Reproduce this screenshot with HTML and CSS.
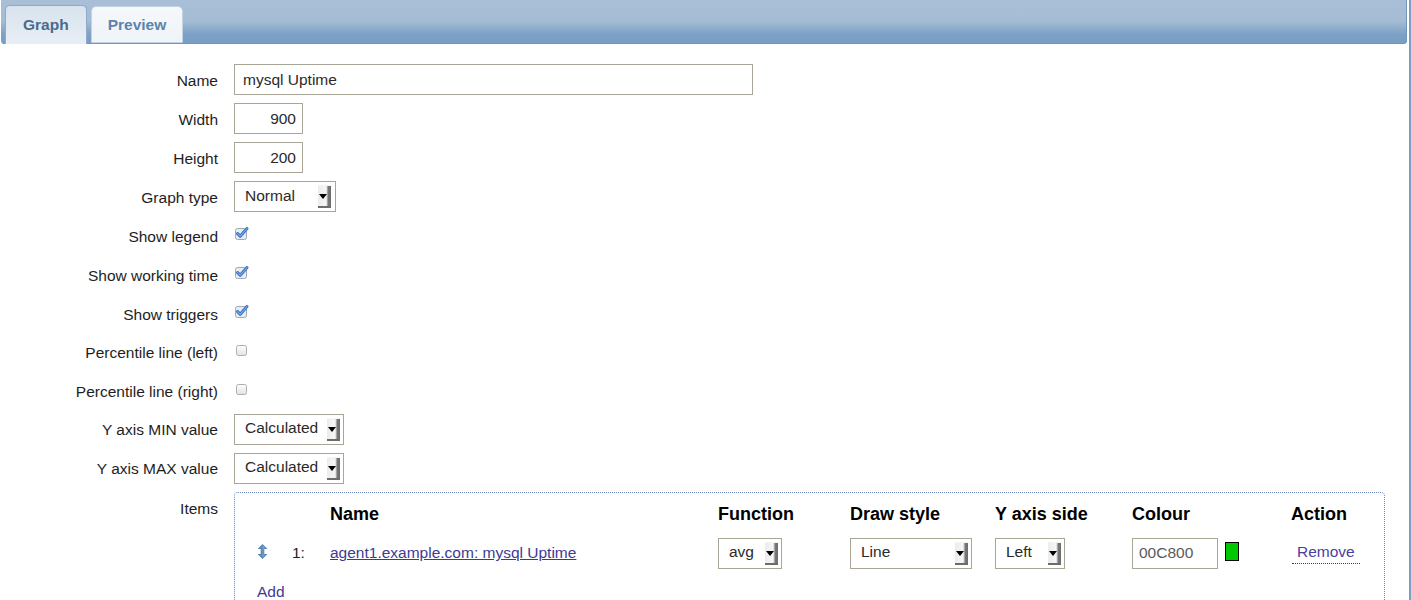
FILE: index.html
```html
<!DOCTYPE html>
<html>
<head>
<meta charset="utf-8">
<title>Graph</title>
<link rel="stylesheet" href="styles.css">
</head>
<body>
<div class="page">
  <div class="tabbar">
    <div class="tab tab-active">Graph</div>
    <div class="tab">Preview</div>
  </div>

  <div class="form">
    <div class="label">Name</div>
    <div class="field"><input class="input input-name" type="text" value="mysql Uptime"></div>

    <div class="label">Width</div>
    <div class="field"><input class="input input-num" type="text" value="900"></div>

    <div class="label">Height</div>
    <div class="field"><input class="input input-num" type="text" value="200"></div>

    <div class="label">Graph type</div>
    <div class="field"><div class="select select-type"><span>Normal</span><span class="sel-btn"><span class="sel-tri"></span></span></div></div>

    <div class="label">Show legend</div>
    <div class="field field-cb"><svg class="cb" width="15" height="14" viewBox="0 0 15 14"><rect x="0.5" y="2.5" width="11" height="11" rx="2" fill="#e5ecf3" stroke="#a0a9b3"/><path d="M2.6 7.6 L5.2 10.2 L12 2.6" fill="none" stroke="#2f68b8" stroke-width="3" stroke-linecap="round" stroke-linejoin="round"/><path d="M2.6 7.6 L5.2 10.2 L12 2.6" fill="none" stroke="#7fb2ee" stroke-width="1.1" stroke-linecap="round" stroke-linejoin="round"/></svg></div>

    <div class="label">Show working time</div>
    <div class="field field-cb"><svg class="cb" width="15" height="14" viewBox="0 0 15 14"><rect x="0.5" y="2.5" width="11" height="11" rx="2" fill="#e5ecf3" stroke="#a0a9b3"/><path d="M2.6 7.6 L5.2 10.2 L12 2.6" fill="none" stroke="#2f68b8" stroke-width="3" stroke-linecap="round" stroke-linejoin="round"/><path d="M2.6 7.6 L5.2 10.2 L12 2.6" fill="none" stroke="#7fb2ee" stroke-width="1.1" stroke-linecap="round" stroke-linejoin="round"/></svg></div>

    <div class="label">Show triggers</div>
    <div class="field field-cb"><svg class="cb" width="15" height="14" viewBox="0 0 15 14"><rect x="0.5" y="2.5" width="11" height="11" rx="2" fill="#e5ecf3" stroke="#a0a9b3"/><path d="M2.6 7.6 L5.2 10.2 L12 2.6" fill="none" stroke="#2f68b8" stroke-width="3" stroke-linecap="round" stroke-linejoin="round"/><path d="M2.6 7.6 L5.2 10.2 L12 2.6" fill="none" stroke="#7fb2ee" stroke-width="1.1" stroke-linecap="round" stroke-linejoin="round"/></svg></div>

    <div class="label">Percentile line (left)</div>
    <div class="field field-cb"><svg class="cb" width="15" height="14" viewBox="0 0 15 14"><defs><linearGradient id="ug1" x1="0" y1="0" x2="0" y2="1"><stop offset="0" stop-color="#ffffff"/><stop offset="1" stop-color="#e2e2e2"/></linearGradient></defs><rect x="1.5" y="3.5" width="10" height="10" rx="2" fill="url(#ug1)" stroke="#aeaeae"/></svg></div>

    <div class="label">Percentile line (right)</div>
    <div class="field field-cb"><svg class="cb" width="15" height="14" viewBox="0 0 15 14"><defs><linearGradient id="ug2" x1="0" y1="0" x2="0" y2="1"><stop offset="0" stop-color="#ffffff"/><stop offset="1" stop-color="#e2e2e2"/></linearGradient></defs><rect x="1.5" y="3.5" width="10" height="10" rx="2" fill="url(#ug2)" stroke="#aeaeae"/></svg></div>

    <div class="label label-sel">Y axis MIN value</div>
    <div class="field"><div class="select select-axis"><span>Calculated</span><span class="sel-btn"><span class="sel-tri"></span></span></div></div>

    <div class="label label-sel">Y axis MAX value</div>
    <div class="field"><div class="select select-axis"><span>Calculated</span><span class="sel-btn"><span class="sel-tri"></span></span></div></div>

    <div class="label">Items</div>
    <div class="field">
      <div class="items">
        <div class="items-grid">
          <div></div>
          <div></div>
          <div class="th">Name</div>
          <div class="th">Function</div>
          <div class="th">Draw style</div>
          <div class="th">Y axis side</div>
          <div class="th">Colour</div>
          <div class="th">Action</div>

          <div class="cell"><svg class="drag" width="11" height="15" viewBox="0 0 11 15"><path d="M5.5 0 L10.5 5 L7.3 5 L7.3 10 L10.5 10 L5.5 15 L0.5 10 L3.7 10 L3.7 5 L0.5 5 Z" fill="#5a87b6"/><path d="M5.5 1.5 L8 4.2 L6.3 4.2 L6.3 10.8 L8 10.8 L5.5 13.5 Z" fill="#7ea6cf"/></svg></div>
          <div class="cell num">1:</div>
          <div class="cell"><a class="link" href="#">agent1.example.com: mysql Uptime</a></div>
          <div class="cell"><div class="select select-func"><span>avg</span><span class="sel-btn"><span class="sel-tri"></span></span></div></div>
          <div class="cell"><div class="select select-draw"><span>Line</span><span class="sel-btn"><span class="sel-tri"></span></span></div></div>
          <div class="cell"><div class="select select-side"><span>Left</span><span class="sel-btn"><span class="sel-tri"></span></span></div></div>
          <div class="cell"><input class="input input-colour" type="text" value="00C800"><span class="swatch"></span></div>
          <div class="cell"><span class="remove">Remove</span></div>
        </div>
        <div class="add">Add</div>
      </div>
    </div>
  </div>
</div>
</body>
</html>
```

FILE: styles.css
```css
html, body {
  margin: 0;
  padding: 0;
  background: #ffffff;
}

body {
  font-family: "Liberation Sans", Arial, sans-serif;
  font-size: 15.5px;
  line-height: 18px;
  color: #1e1e1e;
}

.page {
  width: 1409px;
  min-height: 600px;
  border-right: 2px solid #7a9fc5;
  overflow: hidden;
}

/* ---------- tab bar ---------- */
.tabbar {
  box-sizing: border-box;
  height: 44px;
  margin: 0 2px 0 1px;
  padding-left: 4px;
  display: flex;
  align-items: flex-end;
  gap: 4px;
  background: linear-gradient(#a8bfd7 0%, #a5bcd4 48%, #7ca1c6 78%, #789ec4 100%);
  border-radius: 0 0 4px 4px;
  box-shadow: inset -1px -1px 0 #7294b9;
}

.tab {
  font-weight: bold;
  font-size: 15.5px;
  line-height: 18px;
  padding: 9px 16px 8px;
  margin-bottom: 1px;
  border: 1px solid #c3d3e4;
  border-radius: 5px 5px 0 0;
  background: linear-gradient(#f6f8fb, #eff4f8);
  color: #5a84ae;
}

.tab-active {
  padding: 10px 17px 10px;
  margin-bottom: 0;
  border-color: #8eabc9;
  border-bottom: none;
  background: linear-gradient(#d8e3ee, #e8eef5);
  color: #4a6a8d;
}

/* ---------- form ---------- */
.form {
  display: grid;
  grid-template-columns: 218px 1fr;
  column-gap: 16px;
  row-gap: 8px;
  padding-top: 20px;
}

.label {
  text-align: right;
  padding-top: 8px;
  white-space: nowrap;
  color: #1e1e1e;
}

.label-sel {
  padding-top: 7px;
}

.field {
  min-height: 31px;
  display: flex;
  align-items: flex-start;
}

.field-cb {
  min-height: 30.8px;
}

.input {
  box-sizing: border-box;
  height: 31px;
  margin: 0;
  border: 1px solid #aaa697;
  border-radius: 0;
  background: #fff;
  font-family: "Liberation Sans", Arial, sans-serif;
  font-size: 15.5px;
  color: #2a2a2a;
  padding: 0 8px;
  outline: none;
}

.input-name {
  width: 519px;
}

.input-num {
  width: 69px;
  text-align: right;
  padding-right: 6px;
}

.input-colour {
  width: 86px;
  padding-left: 6px;
  color: #5a5a5a;
}

.select {
  box-sizing: border-box;
  height: 31px;
  border: 1px solid #aaa697;
  background: #fff;
  display: flex;
  align-items: center;
  justify-content: space-between;
  padding: 0 3px 2px 10px;
  color: #2a2a2a;
  white-space: nowrap;
}

.select-type { width: 102px; padding-right: 4px; }
.select-axis { width: 110px; }
.select-func { width: 64px; }
.select-draw { width: 122px; }
.select-side { width: 70px; }

.sel-btn {
  box-sizing: border-box;
  width: 13px;
  height: 23px;
  margin-top: 2px;
  background: linear-gradient(to right, #ececec 0, #f6f6f6 8px, #d0d0d0 9px, #7a7a7a 10px, #6c6c6c 13px);
  border-bottom: 2px solid #6c6c6c;
  border-top: 1px solid #f4f4f4;
  display: flex;
  align-items: center;
  justify-content: flex-start;
  padding-left: 1px;
}

.sel-tri {
  width: 0;
  height: 0;
  border-left: 4px solid transparent;
  border-right: 4px solid transparent;
  border-top: 5px solid #000;
  margin-top: 1px;
}

.cb {
  margin-top: 6px;
  margin-left: 1px;
  display: block;
}

/* ---------- items ---------- */
.items {
  box-sizing: border-box;
  width: 1151px;
  border: 1px dotted #6d86c4;
  border-radius: 4px;
  padding: 10px 0 20px 22px;
}

.items-grid {
  display: grid;
  grid-template-columns: 35px 38px 388px 132px 145px 137px 159px 1fr;
  row-gap: 13px;
  align-items: center;
}

.th {
  font-weight: bold;
  font-size: 18px;
  line-height: 22px;
  color: #000;
}

.cell {
  height: 31px;
  display: flex;
  align-items: center;
}

.num {
  color: #1e1e1e;
}

.drag {
  display: block;
  margin-top: -4px;
}

.link {
  color: #3d3a92;
  text-decoration: underline;
}

.swatch {
  box-sizing: border-box;
  width: 14px;
  height: 19px;
  margin-left: 7px;
  margin-top: -4px;
  border: 1px solid #000;
  background: #00c800;
}

.remove {
  margin-left: 1px;
  padding: 0 5px 2px;
  border-bottom: 1px dotted #3b2f9a;
  color: #4a3fa0;
}

.add {
  margin-top: 14px;
  color: #3f3a96;
}
```
